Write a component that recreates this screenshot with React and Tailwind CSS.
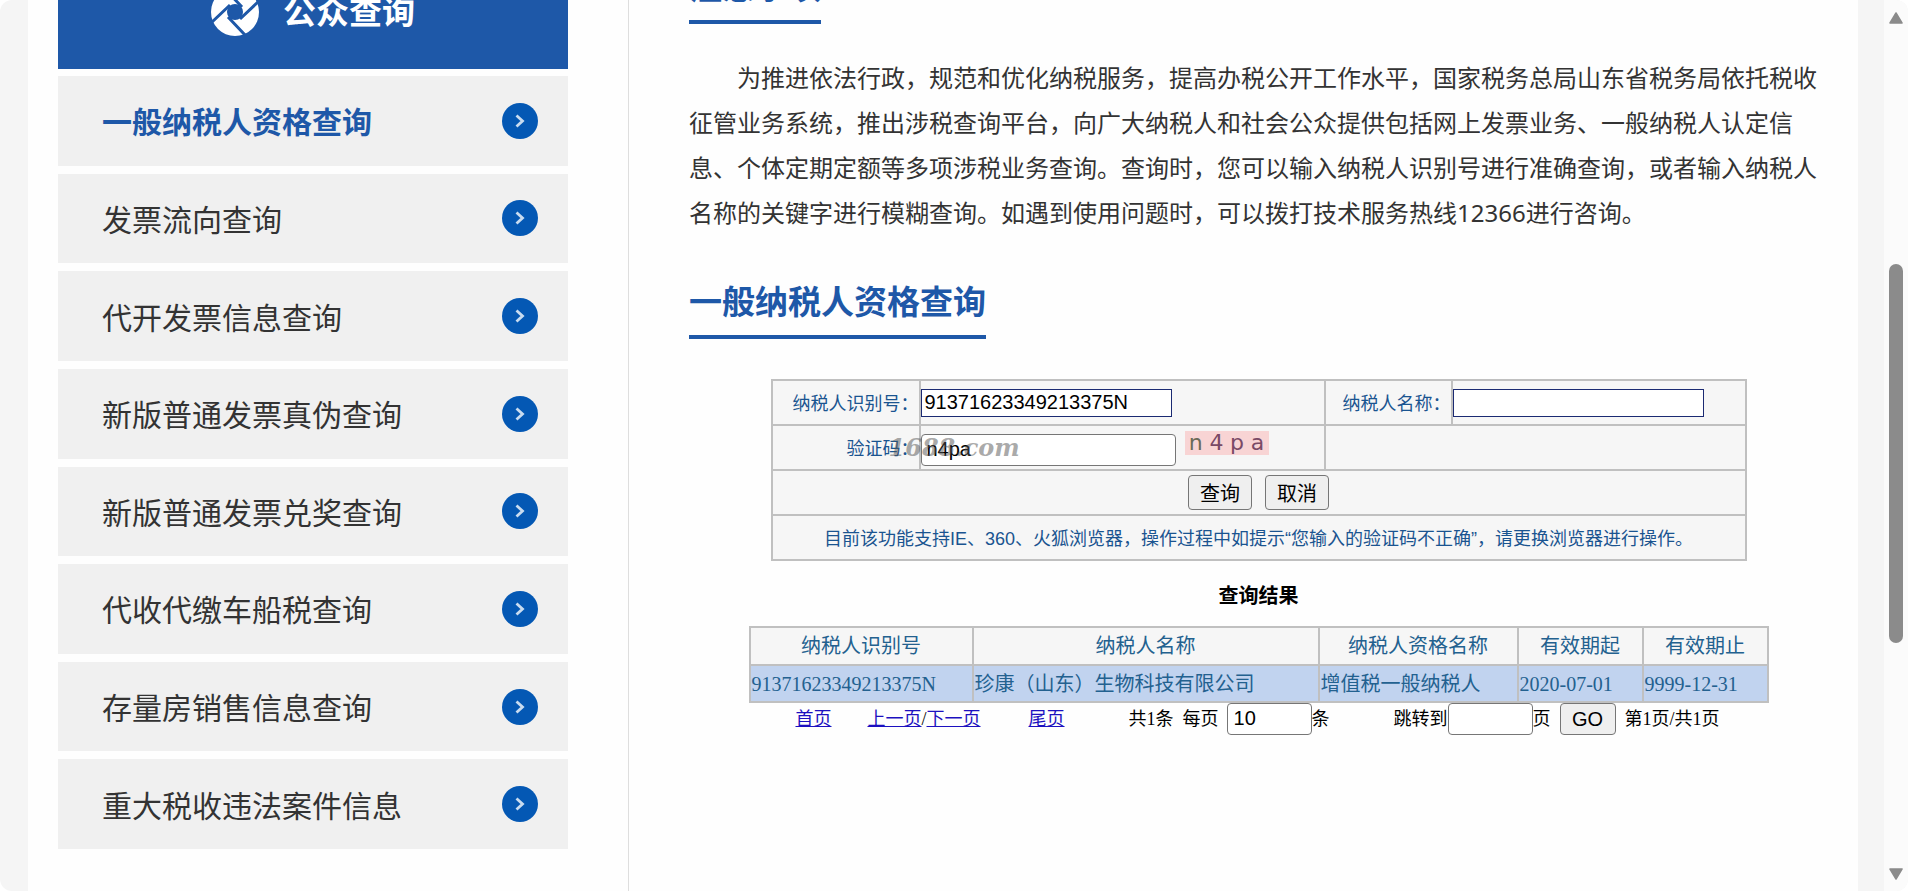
const menus = [
    "一般纳税人资格查询",
    "发票流向查询",
    "代开发票信息查询",
    "新版普通发票真伪查询",
    "新版普通发票兑奖查询",
    "代收代缴车船税查询",
    "存量房销售信息查询",
    "重大税收违法案件信息",
];

const columns = ["纳税人识别号", "纳税人名称", "纳税人资格名称", "有效期起", "有效期止"];

const rows = [
    ["91371623349213375N", "珍康（山东）生物科技有限公司", "增值税一般纳税人", "2020-07-01", "9999-12-31"],
];

const Logo = () => (
    <svg viewBox="0 0 48 48" className="h-12 w-12" aria-hidden="true">
        <circle cx="24" cy="24" r="24" fill="#fff" />
        <circle cx="24" cy="24" r="8" fill="#1e58a8" />
        <path
            d="M17 29 L35 48 M19 17 L0 35 M31 19 L13 0 M29 31 L48 13"
            stroke="#1e58a8"
            strokeWidth="3"
            fill="none"
        />
    </svg>
);

const Arrow = () => (
    <svg viewBox="0 0 36 36" className="h-9 w-9 shrink-0" aria-hidden="true">
        <circle cx="18" cy="18" r="18" fill="#0458b4" />
        <path d="M14.5 12.5 L20.5 18 L14.5 23.5" stroke="#c9dcf0" strokeWidth="2.8" fill="none" />
    </svg>
);

const Title = ({ children }) => (
    <h2 className="w-fit border-b-4 border-[#1e58a8] pb-2 text-[33px] leading-[50px] font-bold text-[#1e58a8]">
        {children}
    </h2>
);

const Sidebar = () => (
    <aside className="flex w-[601px] shrink-0 flex-col border-r border-[#dedede] pr-[60px] pb-[42px] pl-[30px]">
        <div className="-mt-[46px] flex h-[115px] items-center justify-center gap-6 bg-[#1e58a8] text-[33px] font-bold text-white">
            <Logo />
            公众查询
        </div>
        <ul className="mt-[7px] grid flex-1 auto-rows-fr gap-2">
            {menus.map((name, index) => (
                <li key={name} className="flex">
                    <a
                        href="#"
                        className={
                            "flex min-h-16 flex-1 items-center justify-between bg-[#f0f0f0] pr-[30px] pl-11 text-[30px] " +
                            (index === 0 ? "font-bold text-[#1e58a8]" : "text-[#333]")
                        }
                    >
                        <span className="pt-[2px]">{name}</span>
                        <Arrow />
                    </a>
                </li>
            ))}
        </ul>
    </aside>
);

const Captcha = () => (
    <span className="flex h-6 w-[84px] items-center justify-around bg-[#f8d4d4] px-px font-['DejaVu_Sans'] text-[22px] text-[#7a4a66]">
        <span className="text-[#6b6a58]">n</span>
        <span>4</span>
        <span>p</span>
        <span>a</span>
    </span>
);

const SearchForm = () => (
    <form onSubmit={(e) => e.preventDefault()}>
        <table className="mx-auto mt-10 w-full max-w-[976px] table-fixed border-collapse bg-[#f6f6f6] font-['Liberation_Sans','Noto_Sans_CJK_SC',sans-serif] text-[18px] text-[#1a5490] [&_td]:h-[45px] [&_td]:border-2 [&_td]:border-[#c0c0c0] [&_td]:p-0 [&_label]:block [&_label]:pt-1">
            <colgroup>
                <col className="w-[148px]" />
                <col className="w-[405px]" />
                <col className="w-[127px]" />
                <col />
            </colgroup>
            <tbody>
                <tr>
                    <td className="text-right">
                        <label htmlFor="nsrsbh">纳税人识别号：</label>
                    </td>
                    <td>
                        <input
                            id="nsrsbh"
                            defaultValue="91371623349213375N"
                            className="block h-7 w-[251px] border border-[#1b2a72] bg-white px-[3px] pb-[2px] text-[20px] text-black"
                        />
                    </td>
                    <td className="text-right">
                        <label htmlFor="nsrmc">纳税人名称：</label>
                    </td>
                    <td>
                        <input
                            id="nsrmc"
                            className="block h-7 w-[251px] border border-[#1b2a72] bg-white px-[3px] pb-[2px] text-[20px] text-black"
                        />
                    </td>
                </tr>
                <tr>
                    <td className="text-right">
                        <label htmlFor="yzm">验证码：</label>
                    </td>
                    <td>
                        <div className="relative flex h-9 items-end gap-[9px]">
                            <input
                                id="yzm"
                                defaultValue="n4pa"
                                className="h-8 w-[255px] rounded border border-[#767676] bg-white px-[5px] text-[20px] text-black"
                            />
                            <div className="self-start pt-px">
                                <Captcha />
                            </div>
                            <span className="pointer-events-none absolute top-[2px] -left-8 font-['DejaVu_Serif',serif] text-[24px] leading-8 font-bold text-[#555]/50 italic">
                                1688.com
                            </span>
                        </div>
                    </td>
                    <td colSpan={2}></td>
                </tr>
                <tr>
                    <td colSpan={4}>
                        <div className="flex justify-center gap-[13px] text-[20px] text-black">
                            <button type="submit" className="h-[35px] w-16 rounded border border-[#767676] bg-[#efefef] pt-[2px]">
                                查询
                            </button>
                            <button type="reset" className="h-[35px] w-16 rounded border border-[#767676] bg-[#efefef] pt-[2px]">
                                取消
                            </button>
                        </div>
                    </td>
                </tr>
                <tr>
                    <td colSpan={4}>
                        <p className="pt-1 text-center">
                            目前该功能支持IE、360、火狐浏览器，操作过程中如提示“您输入的验证码不正确”，请更换浏览器进行操作。
                        </p>
                    </td>
                </tr>
            </tbody>
        </table>
    </form>
);

const Result = () => (
    <section className="mx-auto mt-5 w-full max-w-[1020px] font-['Liberation_Serif','Noto_Sans_CJK_SC',serif]">
        <h3 className="text-center text-[20px] leading-[30px] font-bold text-black">查询结果</h3>
        <table className="mt-[15px] w-full table-fixed border-collapse text-[20px] leading-7 text-[#23618f] [&_td]:h-[37px] [&_td]:border-2 [&_td]:border-[#c0c0c0] [&_td]:p-px [&_th]:h-[38px] [&_th]:border-2 [&_th]:border-[#c0c0c0] [&_th]:p-0 [&_th]:font-normal">
            <colgroup>
                <col className="w-[223px]" />
                <col className="w-[346px]" />
                <col className="w-[199px]" />
                <col className="w-[125px]" />
                <col />
            </colgroup>
            <thead>
                <tr className="bg-[#f6f6f6]">
                    {columns.map((name) => (
                        <th key={name}>{name}</th>
                    ))}
                </tr>
            </thead>
            <tbody>
                {rows.map((row) => (
                    <tr key={row[0]} className="bg-[#c1d3ef]">
                        {row.map((cell) => (
                            <td key={cell}>{cell}</td>
                        ))}
                    </tr>
                ))}
            </tbody>
        </table>
        <div className="flex items-center pl-[47px] text-[18px] whitespace-nowrap text-black">
            <a href="#" className="text-[#1c10c0] underline">首页</a>
            <div className="ml-9">
                <a href="#" className="text-[#1c10c0] underline">上一页</a>/
                <a href="#" className="text-[#1c10c0] underline">下一页</a>
            </div>
            <a href="#" className="ml-12 text-[#1c10c0] underline">尾页</a>
            <div className="ml-16 flex items-center">
                <span>共1条</span>
                <label htmlFor="size" className="mr-2 ml-[9px]">每页</label>
                <input
                    id="size"
                    defaultValue="10"
                    className="h-8 w-[85px] rounded border border-[#767676] bg-white px-[6px] pb-[2px] font-['Liberation_Sans'] text-[20px]"
                />
                <span>条</span>
            </div>
            <div className="ml-16 flex items-center">
                <label htmlFor="jump">跳转到</label>
                <input
                    id="jump"
                    className="h-8 w-[85px] rounded border border-[#767676] bg-white px-[6px] font-['Liberation_Sans'] text-[20px]"
                />
                <span>页</span>
                <button type="button" className="mx-[9px] h-8 w-14 rounded border border-[#767676] bg-[#efefef] pb-[2px] font-['Liberation_Sans'] text-[20px]">
                    GO
                </button>
                <span>第1页/共1页</span>
            </div>
        </div>
    </section>
);

const ScrollBar = () => (
    <div className="flex w-6 shrink-0 flex-col items-center bg-[#fbfbfb] pt-3 pb-[11px]" aria-hidden="true">
        <svg viewBox="0 0 14 12" className="h-3 w-[14px]">
            <path d="M7 1 L13 11 H1 Z" fill="#8b8b8b" stroke="#8b8b8b" strokeWidth="1.5" strokeLinejoin="round" />
        </svg>
        <div className="flex w-[14px] flex-1 flex-col">
            <div className="flex-[240]" />
            <div className="flex-[379] rounded-full bg-[#8b8b8b]" />
            <div className="flex-[225]" />
        </div>
        <svg viewBox="0 0 14 12" className="h-3 w-[14px]">
            <path d="M7 11 L13 1 H1 Z" fill="#8b8b8b" stroke="#8b8b8b" strokeWidth="1.5" strokeLinejoin="round" />
        </svg>
    </div>
);

const App = () => {
    return (
        <div className="flex min-h-screen overflow-hidden rounded-xl bg-[#f5f5f5] pl-7 font-['Noto_Sans','Noto_Sans_CJK_SC',sans-serif]">
            <main className="mr-[26px] flex flex-1 bg-[#fefefe]">
                <Sidebar />
                <div className="-mt-[38px] min-w-0 flex-1 pr-[30px] pl-[60px]">
                    <Title>注意事项</Title>
                    <p className="mt-[31px] mb-[42px] indent-[48px] text-[24px] leading-[45px] text-[#333]">
                        为推进依法行政，规范和优化纳税服务，提高办税公开工作水平，国家税务总局山东省税务局依托税收征管业务系统，推出涉税查询平台，向广大纳税人和社会公众提供包括网上发票业务、一般纳税人认定信息、个体定期定额等多项涉税业务查询。查询时，您可以输入纳税人识别号进行准确查询，或者输入纳税人名称的关键字进行模糊查询。如遇到使用问题时，可以拨打技术服务热线12366进行咨询。
                    </p>
                    <Title>一般纳税人资格查询</Title>
                    <SearchForm />
                    <Result />
                </div>
            </main>
            <ScrollBar />
        </div>
    );
};

export default App;
